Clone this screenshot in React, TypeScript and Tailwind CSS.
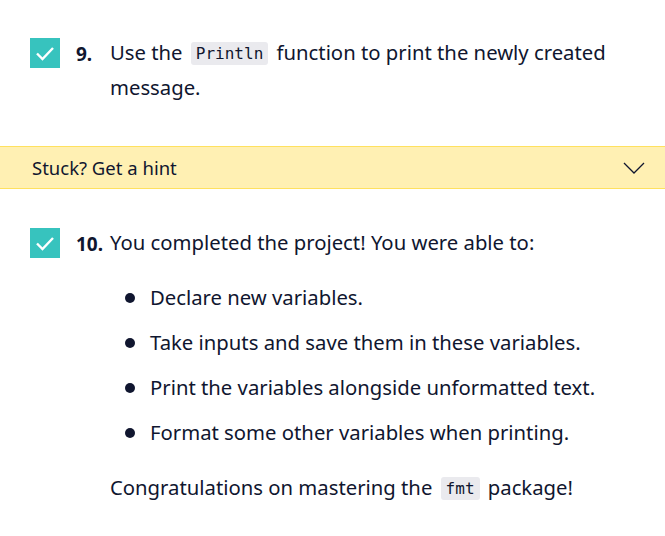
const navy = 'text-[#10162f]'

function Check() {
  return (
    <div className="flex h-[30px] w-[30px] shrink-0 items-center justify-center bg-[#37c3be]">
      <svg width="20" height="16" viewBox="0 0 20 16" fill="none">
        <path d="M2 8.5l5.5 5.5L18 3" stroke="#fff" strokeWidth="2.4" />
      </svg>
    </div>
  )
}

function Code({ children }: { children: string }) {
  return (
    <code className="mx-[3px] inline-block rounded-[3px] bg-[#eaeaee] px-[5px] align-[1px] font-['DejaVu_Sans_Mono',monospace] text-[16px] leading-[23px]">
      {children}
    </code>
  )
}

const bullets = [
  'Declare new variables.',
  'Take inputs and save them in these variables.',
  'Print the variables alongside unformatted text.',
  'Format some other variables when printing.',
]

export default function App() {
  return (
    <div className={`min-h-[536px] w-[665px] bg-white font-['Noto_Sans',sans-serif] ${navy}`}>
      <div className="flex pt-[38px] pl-[30px] pr-4">
        <Check />
        <span className="w-[50px] shrink-0 pl-[16px] pt-[1px] text-[19px] leading-[30px] font-bold">9.</span>
        <p className="mt-[-3px] text-[20.3px] leading-[35px]">
          Use the <Code>Println</Code> function to print the newly created message.
        </p>
      </div>

      <div className="mt-[41px] flex h-[43px] items-center justify-between border-y border-[#ffe15f] bg-[#fff0b3] pl-[32px] pr-[20px]">
        <span className="text-[18.5px]">Stuck? Get a hint</span>
        <svg width="22" height="12" viewBox="0 0 22 12" fill="none">
          <path d="M1 1l10 10L21 1" stroke="#10162f" strokeWidth="1.3" />
        </svg>
      </div>

      <div className="flex pt-[39px] pl-[30px] pr-4">
        <Check />
        <span className="w-[50px] shrink-0 pl-[16px] pt-[1px] text-[19px] leading-[30px] font-bold">10.</span>
        <div className="mt-[-3px] text-[20.3px] leading-[35px]">
          <p>You completed the project! You were able to:</p>
          <ul className="mt-[20px] flex flex-col gap-[10px] pl-[15px]">
            {bullets.map((b) => (
              <li key={b} className="flex items-center">
                <span className="mr-[15px] h-[10px] w-[10px] shrink-0 rounded-full bg-[#10162f]" />
                {b}
              </li>
            ))}
          </ul>
          <p className="mt-[20px]">
            Congratulations on mastering the <Code>fmt</Code> package!
          </p>
        </div>
      </div>
    </div>
  )
}
